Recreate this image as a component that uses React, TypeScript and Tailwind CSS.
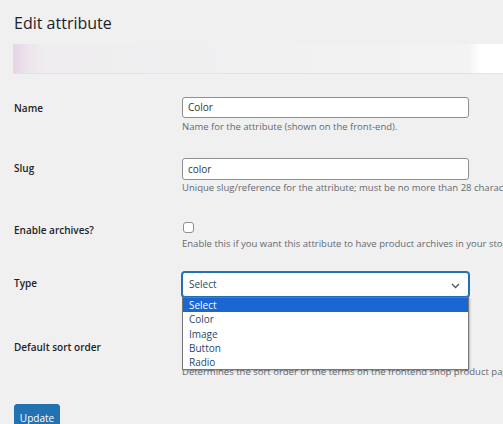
import React from "react";

function Row({
  label,
  children,
  labelPt,
  className,
}: {
  label: string;
  children: React.ReactNode;
  labelPt: string;
  className?: string;
}) {
  return (
    <div className={"flex " + (className ?? "")}>
      <div className={"w-[168px] shrink-0 text-[10px] font-semibold text-[#1d2327] leading-[14px] whitespace-nowrap " + labelPt}>
        {label}
      </div>
      <div className="relative flex-1">{children}</div>
    </div>
  );
}

function Chevron() {
  return (
    <svg width="9" height="6" viewBox="0 0 9 6" className="absolute right-[8px] top-[10px]">
      <path d="M1 1 L4.5 4.5 L8 1" fill="none" stroke="#50575e" strokeWidth="1.3" />
    </svg>
  );
}

export default function App() {
  const options = ["Select", "Color", "Image", "Button", "Radio"];
  return (
    <div className="w-[503px] h-[424px] overflow-hidden bg-[#f0f0f1] [font-family:'Open_Sans','Noto_Sans',sans-serif] text-[#1d2327]">
      <h1 className="pl-[14px] pt-[11px] h-[35px] text-[16px] leading-[24px] font-normal text-[#1d2327]">
        Edit attribute
      </h1>
      <div className="ml-[13px] mt-[9px] h-[30px] border-b border-[#e2e2e2] bg-[linear-gradient(to_right,#e7d3e6_0px,#ece4ec_14px,#efedef_30px,#f1f1f2_60%,#f3f3f3_93%,#ffffff_95.5%)]" />

      <div className="pl-[14px] pr-0">
        <Row label="Name" labelPt="pt-[4px]" className="mt-[23px]">
          <div className="w-[287px] h-[21px] bg-white border border-[#8c8f94] rounded-[3px] px-[5px] text-[10px] leading-[19px] text-[#2c3338]">
            Color
          </div>
          <div className="mt-[2px] text-[9.5px] leading-[14px] text-[#646970] whitespace-nowrap">
            Name for the attribute (shown on the front-end).
          </div>
        </Row>

        <Row label="Slug" labelPt="pt-[3px]" className="mt-[24px]">
          <div className="w-[287px] h-[22px] bg-white border border-[#8c8f94] rounded-[3px] px-[5px] text-[10px] leading-[20px] text-[#2c3338]">
            color
          </div>
          <div className="mt-[1px] text-[9.5px] leading-[14px] text-[#646970] whitespace-nowrap">
            Unique slug/reference for the attribute; must be no more than 28 characters.
          </div>
        </Row>

        <Row label="Enable archives?" labelPt="pt-[1px]" className="mt-[27px]">
          <div className="ml-[1px] w-[11px] h-[11px] bg-white border border-[#8c8f94] rounded-[3px]" />
          <div className="mt-[4px] text-[9.5px] leading-[14px] text-[#646970] whitespace-nowrap">
            Enable this if you want this attribute to have product archives in your store.
          </div>
        </Row>

        <Row label="Type" labelPt="pt-[4px]" className="mt-[21px] relative z-10">
          <div className="relative w-[287px] h-[25px] bg-white border border-[#2271b1] shadow-[0_0_0_1px_#2271b1] rounded-[3px] px-[6px] text-[10px] leading-[23px] text-[#2c4866]">
            Select
            <Chevron />
          </div>
          <div className="absolute left-0 top-[25px] w-[287px] bg-white border border-[#767676] shadow-[1px_1px_2px_rgba(0,0,0,0.25)] text-[10px]">
            {options.map((o, i) => (
              <div
                key={o}
                className={
                  "h-[14.3px] leading-[14.3px] px-[6px] " +
                  (i === 0 ? "bg-[#1a66d2] text-white" : "text-[#2c4866]")
                }
              >
                {o}
              </div>
            ))}
          </div>
        </Row>

        <Row label="Default sort order" labelPt="pt-[5px]" className="mt-[38px]">
          <div className="relative w-[287px] h-[25px] bg-white border border-[#8c8f94] rounded-[3px]">
            <Chevron />
          </div>
          <div className="mt-[5px] text-[9.5px] leading-[14px] text-[#646970] whitespace-nowrap">
            Determines the sort order of the terms on the frontend shop product pages.
          </div>
        </Row>

        <button className="mt-[25px] h-[28px] w-[46px] rounded-[3px] bg-[#2271b1] text-white text-[10px] leading-[26px] border border-[#2271b1]">
          Update
        </button>
      </div>
    </div>
  );
}
